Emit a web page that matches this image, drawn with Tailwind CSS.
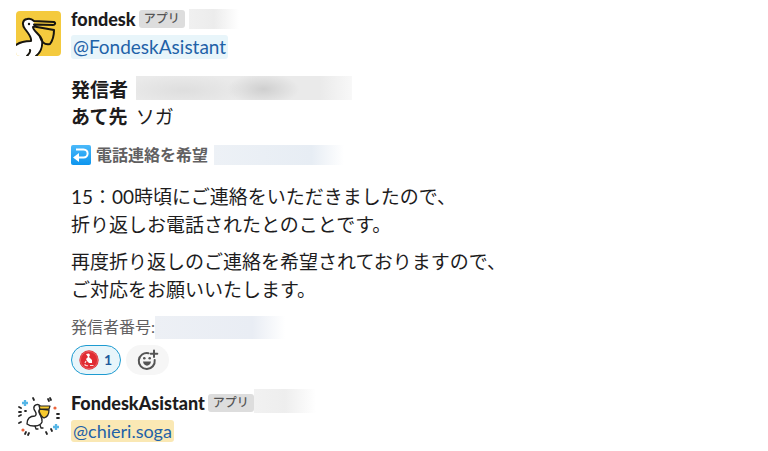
<!DOCTYPE html>
<html lang="ja">
<head>
<meta charset="utf-8">
<meta name="viewport" content="width=device-width, initial-scale=1">
<title>fondesk</title>
<script src="https://cdn.jsdelivr.net/npm/@tailwindcss/browser@4"></script>
</head>
<body class="bg-white text-[#1d1c1d] font-[Lato,'Noto_Sans_CJK_JP',sans-serif] text-[19px] leading-[28px]">
<main class="overflow-hidden">
  <article class="flex gap-[10px] px-4 pt-[5px]">
    <svg class="mt-[6px] size-[45px] shrink-0 rounded-[4px]" viewBox="0 0 45 45" role="img" aria-label="fondesk">
      <rect width="45" height="45" fill="#f4ca3e"/>
      <path d="M0 34C4 31 8 30 15 30C16 26 12 22 9 18C6 14 6 9 11 8C15 7 18 9 18 13C17 19 24 23 26 29C27 36 24 42 19 45H0Z" fill="#fff"/>
      <path d="M0 34C4 31 8 30 15 30C16 26 12 22 9 18C6 14 6 9 11 8C14 7 16 8 18 10L38 11C40 12 39 14 37 14L18 13.500M17 16C17 20 24 23 26 29C27 36 24 42 20 45M18 15.500L38 19C38 24 37 29 34 33C30 34 26 32 24 26M14 39C15 41 13 43 11 45" fill="none" stroke="#17150f" stroke-width="2" stroke-linecap="round" stroke-linejoin="round"/>
      <circle cx="13" cy="13" r="1.2" fill="#17150f"/>
    </svg>
    <div class="min-w-0 flex-1">
      <header class="flex h-7 items-center">
        <h2 class="text-[18px] font-black">fondesk</h2>
        <span class="ml-[3px] h-[18px] rounded-[3px] bg-[#dddddd] px-[5px] text-[12px] leading-[17px] font-medium text-[#555]">アプリ</span>
        <span class="ml-1 h-5 w-[50px] bg-linear-to-r from-[#f0f0f0] via-[#ececec] to-white"></span>
      </header>
      <p class="flex h-7 items-center"><a href="#" class="rounded-[3px] bg-[#e8f5fa] px-[2px] leading-6 text-[#1f62a8]">@FondeskAsistant</a></p>
      <dl class="mt-[15px] leading-[27px]">
        <div class="flex items-center gap-2">
          <dt class="font-bold">発信者</dt>
          <dd class="mb-[3px] h-6 w-[216px] bg-[#eaeaea] bg-[radial-gradient(36px_16px_at_59%_55%,#cfcfcf,transparent),radial-gradient(60px_16px_at_22%_60%,#dedede,transparent),linear-gradient(to_right,transparent_85%,#f8f8f8)]"></dd>
        </div>
        <div class="flex gap-2">
          <dt class="font-bold">あて先</dt>
          <dd>ソガ</dd>
        </div>
      </dl>
      <p class="mt-[11px] flex items-center text-[16px] font-bold text-[#616061]">
        <svg class="mr-[5px] size-5 shrink-0" viewBox="0 0 20 20" aria-hidden="true">
          <defs><linearGradient id="blue" x2="0" y2="1"><stop stop-color="#4bb9fa"/><stop offset="1" stop-color="#0d95ee"/></linearGradient></defs>
          <rect width="20" height="20" rx="2" fill="url(#blue)"/>
          <path d="M5 4.500H12.500C18 4.500 18 12.500 12.500 12.500H6" fill="none" stroke="#fff" stroke-width="2"/>
          <path d="M2 12.500L8 8V17Z" fill="#fff"/>
        </svg>
        電話連絡を希望
        <span class="ml-[6px] h-5 w-[130px] bg-linear-to-r from-[#edf1f6] via-[#e7edf4] via-75% to-white"></span>
      </p>
      <p class="mt-[14px]">15：00時頃にご連絡をいただきましたので、<br>折り返しお電話されたとのことです。</p>
      <p class="mt-[9px]">再度折り返しのご連絡を希望されておりますので、<br>ご対応をお願いいたします。</p>
      <p class="mt-[9px] flex items-center text-[16px] text-[#616061]">発信者番号:<span class="h-[23px] w-[130px] bg-linear-to-r from-[#edf0f5] via-[#e9edf4] via-75% to-white"></span></p>
      <div class="mt-1 flex gap-[5px]">
        <button class="flex h-[30px] w-[50px] items-center justify-between rounded-full border border-[#1d9bd1] bg-[#e8f5fa] pr-2 pl-[7px] text-[14px] font-bold text-[#1d5a9c]">
          <svg class="size-5" viewBox="0 0 20 20" aria-hidden="true">
            <circle cx="10" cy="10" r="9.700" fill="#e02b32"/>
            <circle cx="10" cy="10" r="8.600" fill="none" stroke="#f08080" stroke-width=".6"/>
            <path d="M7 4L10 3.500L11 5L10 7L13 10L13 13L10 13L8 11L7 9L9 7Z" fill="#fff"/>
            <path d="M5.500 14.500C7 16 8 16 9 15.500M11 15.500H14.500M7 11L6 13" fill="none" stroke="#fbdada" stroke-width="1.200"/>
          </svg>1
        </button>
        <button class="flex h-[30px] w-[43px] items-center justify-center rounded-full bg-[#f6f6f6] text-[#555]" aria-label="リアクションを追加">
          <svg class="size-[22px]" viewBox="0 0 22 22" fill="none" stroke="currentColor" stroke-width="2" stroke-linecap="round" aria-hidden="true">
            <path d="M11.500 4.200A8 8 0 1 0 17.700 11M17 1.500V8M13.700 4.700H20.300"/>
            <path d="M6 12.500H14C13.500 18 6.500 18 6 12.500Z" fill="currentColor" stroke="none"/>
            <circle cx="7.300" cy="9.300" r="1.300" fill="currentColor" stroke="none"/><circle cx="12.700" cy="9.300" r="1.300" fill="currentColor" stroke="none"/>
          </svg>
        </button>
      </div>
    </div>
  </article>
  <article class="flex gap-[10px] px-4 pt-[14px]">
    <svg class="mt-[5px] size-[45px] shrink-0" viewBox="0 0 45 45" role="img" aria-label="FondeskAsistant" fill="none" stroke="#252525" stroke-linecap="round" stroke-linejoin="round">
      <path d="M24 12C22 9 17 11 18 15C19 18 22 20 19 22C15 22 11 24 11 30C15 33 24 33 26 28C27 24 24 22 23 18C23 16 24 15 24 12Z" fill="#fff" stroke-width="1.400"/>
      <path d="M24 15L33 16C33 20 31 23 28 24C25 23 24 20 23 17Z" fill="#f7ca2e" stroke-width="1.300"/>
      <path d="M23 12L34 12L33 15L24 15Z" fill="#f7ca2e" stroke-width="1.200"/>
      <path d="M19 32L20 35H22M24 31L25 34H27" stroke-width="1.300"/>
      <path d="M17 4L18 6M32 5L33 7M34 4L35 6M3 13L5 14M3 18H5M9 17H10M3 22L5 21M3 29L5 28M10 38L9 40M13 39L12 41M30 38L31 40M35 35L36 37M41 20H43M41 24H43" stroke-width="1.800"/>
      <path d="M9 6V12M6 9H12M40 30V36M37 33H43" stroke="#55b6e7" stroke-width="2.300" stroke-linecap="butt"/>
      <circle cx="39" cy="14" r="1.600" fill="#ec633b" stroke="none"/><circle cx="7" cy="36" r="1.600" fill="#ec633b" stroke="none"/>
    </svg>
    <div class="min-w-0 flex-1">
      <header class="flex h-7 items-center">
        <h2 class="text-[18px] font-black">FondeskAsistant</h2>
        <span class="ml-[3px] h-[18px] rounded-[3px] bg-[#dddddd] px-[5px] text-[12px] leading-[17px] font-medium text-[#555]">アプリ</span>
        <span class="mb-1 h-6 w-[62px] bg-linear-to-r from-[#f1f1f1] via-[#eeeeee] to-white"></span>
      </header>
      <p class="flex h-7 items-center"><a href="#" class="rounded-[3px] bg-[#fae8b4] px-[2px] text-[18px] leading-[22px] text-[#1f62a8]">@chieri.soga</a></p>
    </div>
  </article>
</main>
</body>
</html>
